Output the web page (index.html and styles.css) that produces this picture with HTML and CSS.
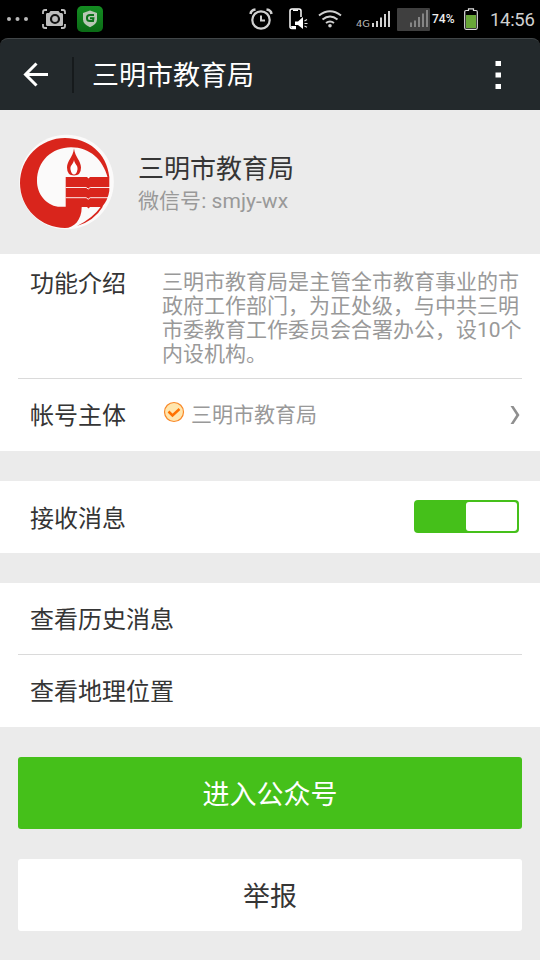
FILE: index.html
```html
<!DOCTYPE html>
<html lang="zh-CN">
<head>
<meta charset="utf-8">
<title>三明市教育局</title>
<link rel="stylesheet" href="styles.css">
</head>
<body>
<div class="status">
  <svg class="s-dots" width="24" height="6" viewBox="0 0 24 6" fill="#b9b9b9"><circle cx="3" cy="3" r="2"/><circle cx="11.500" cy="3" r="2"/><circle cx="20" cy="3" r="2"/></svg>
  <svg class="s-cam" width="24" height="20" viewBox="0 0 24 20"><path d="M1 5V3q0-2 2-2h2M19 1h2q2 0 2 2v2M1 15v2q0 2 2 2h2M19 19h2q2 0 2-2v-2" fill="none" stroke="#bdbdbd" stroke-width="1.800"/><path d="M5 4h2l1.500-2h8L18 4h1.500q1.500 0 1.500 1.500v10q0 1.500-1.500 1.500h-14Q4 17 4 15.500v-10Q4 4 5 4z" fill="#bdbdbd"/><circle cx="13" cy="10" r="4" fill="#bdbdbd" stroke="#111" stroke-width="2.200"/></svg>
  <svg class="s-shield" width="26" height="26" viewBox="0 0 26 26"><defs><linearGradient id="g" x2="0" y2="1"><stop stop-color="#148d22"/><stop offset="1" stop-color="#0b6b16"/></linearGradient></defs><rect width="26" height="26" rx="5" fill="url(#g)"/><path d="M13 4.500 20 7v6.500q0 4.500-7 7.800-7-3.300-7-7.800V7z" fill="#b9c7b5"/><path d="M17 9h-4q-3 0-3 2.500v1Q10 15 13 15h3l.4-2.700H13" fill="none" stroke="#0c731a" stroke-width="2"/></svg>
  <svg class="s-alarm" width="24" height="22" viewBox="0 0 24 22" fill="none" stroke="#d0d0d0"><circle cx="12" cy="12" r="8.700" stroke-width="2.200"/><path d="M12 7.500v5h4" stroke-width="2"/><path d="M1.500 6q.5-4 5-4.500M22.500 6q-.5-4-5-4.500" stroke-width="2.500"/></svg>
  <svg class="s-phone" width="20" height="22" viewBox="0 0 20 22"><path d="M7 20.500H3q-2 0-2-2V3q0-2 2-2h7q2 0 2 2v6" fill="none" stroke="#fff" stroke-width="1.500"/><path d="M4 1.500h5v1.500H4zM2 18h5v3H3zM6 13.500h3l5-4.500v12l-5-4H6z" fill="#fff"/><path d="m15.500 13 2.500-1.500M15.500 15.500h3M15.500 18l2.500 1.300" stroke="#ddd" stroke-width="1.200"/></svg>
  <svg class="s-wifi" width="24" height="18" viewBox="0 0 24 18" fill="none" stroke="#d0d0d0" stroke-width="2"><path d="M1 5.500q11-8.500 22 0M4.500 9.500q7.500-6 15 0M8 13q4-3 8 0"/><circle cx="12" cy="15.700" r="1.800" fill="#d0d0d0" stroke="none"/></svg>
  <svg class="s-sig1" width="35" height="18" viewBox="0 0 35 18"><path d="M16 13h2v4h-2zM20 11h2v6h-2zM24 7.500h2V17h-2zM28 4h2v13h-2zM32 1h2v16h-2z" fill="#d0d0d0"/><text class="net" x="0" y="17.300" textLength="14" lengthAdjust="spacingAndGlyphs">4G</text></svg>
  <svg class="s-sig2" width="33" height="23" viewBox="0 0 33 23"><rect width="33" height="23" rx="1" fill="#3f3f3f"/><path d="M13 14.500h2V19h-2zM17 12.500h2V19h-2zM21 9h2v10h-2zM25 5.500h2V19h-2zM29 2h2v17h-2z" fill="#858585"/></svg>
  <span class="pct">74%</span>
  <svg class="s-bat" width="14" height="22" viewBox="0 0 14 22"><path d="M4.500 2.500v-1.700h5v1.700h2.500q1.300 0 1.300 1.300v16q0 1.500-1.300 1.500H2q-1.300 0-1.300-1.500v-16q0-1.300 1.300-1.300z" fill="none" stroke="#ddd" stroke-width="1.200"/><path d="M2 7h10v13H2z" fill="#69a739"/></svg>
  <span class="time">14:56</span>
</div>
<div class="barwrap">
<header class="bar">
  <svg class="back" width="26" height="26" viewBox="0 0 26 26" fill="none" stroke="#fff" stroke-width="3"><path d="M25 12.500H3M13.500 1.500 2.500 12.500l11 11"/></svg>
  <i class="sep"></i>
  <h1>三明市教育局</h1>
  <svg class="more" width="6" height="28" viewBox="0 0 6 28" fill="#fff"><path d="M.5 0H6v5H.5zM.5 11.500H6v5H.5zM.5 23H6v5H.5z"/></svg>
</header>
</div>
<section class="profile">
  <svg class="logo" width="96" height="96" viewBox="0 0 96 96">
    <circle cx="48.500" cy="48" r="47.300" fill="#fbfafa"/>
    <path d="M47 4A45 45 0 1 0 47 94C56 94 63.700 86 63.700 73H84Q90 66 91.300 57V43C89 19 70 4 47 4zM47.700 43V72.700H40C28 71 19 60 19 47C19 27 34 13.300 53 13.300C72 13.300 85 26 89.500 43z" fill="#d9251c" fill-rule="evenodd"/>
    <path d="M47.700 53.500h20.500l2 1.500 2-1.500H92M47.700 63.700h20.500l2 1.500 2-1.500H90" fill="none" stroke="#fff" stroke-width=".9"/>
    <path d="m69 73 1.500 1.500L72 73z" fill="#d9251c"/>
    <path d="m69 43 1.500 1.500L72 43z" fill="#fff"/>
    <path d="M59 92Q75 84 83 72.500h2Q76 87 59 92z" fill="#d9251c"/>
    <path d="M56 14.500C55 23 49 27 49 33.500Q49 41.500 56 41.500T63 33.500C63 27 57 23 56 14.500z" fill="#d9251c"/>
    <path d="M56 26c-1 5-4 5-3.500 9.500q1 5 3.500 5t3.500-5C60 31 57 31 56 26z" fill="#fff"/>
  </svg>
  <div class="who"><div class="name">三明市教育局</div><div class="wx">微信号: smjy-wx</div></div>
</section>
<section class="group">
  <div class="row intro"><span class="label">功能介绍</span><p>三明市教育局是主管全市教育事业的市<br>政府工作部门，为正处级，与中共三明<br>市委教育工作委员会合署办公，设10个<br>内设机构。</p></div>
  <div class="row line account"><span class="label">帐号主体</span>
    <svg class="check" width="22" height="22" viewBox="0 0 22 22"><circle cx="11" cy="11" r="9.500" fill="#ffe6ae" stroke="#f98828" stroke-width="1.200"/><path d="m5.500 10.500 4 4L16.500 8" fill="none" stroke="#ff7200" stroke-width="2.500"/></svg>
    <span class="owner">三明市教育局</span>
    <svg class="chev" width="10" height="20" viewBox="0 0 10 20"><path d="M.5 1h3L9.500 10l-6 9h-3L6.300 10z" fill="#8f8f8f"/></svg>
  </div>
</section>
<section class="group">
  <div class="row receive"><span class="label">接收消息</span><div class="switch"><i></i></div></div>
</section>
<section class="group">
  <div class="row short"><span class="label">查看历史消息</span></div>
  <div class="row line"><span class="label">查看地理位置</span></div>
</section>
<div class="btn primary">进入公众号</div>
<div class="btn">举报</div>
</body>
</html>
```
FILE: styles.css
```css
* { box-sizing: border-box; }
body {
  margin: 0;
  width: 540px;
  height: 960px;
  overflow: hidden;
  background: #ebebeb;
  color: #353535;
  font-family: Roboto, "Noto Sans CJK SC", sans-serif;
  font-weight: 400;
}
svg { display: block; flex: none; }

.status {
  display: flex;
  align-items: center;
  height: 38px;
  padding-left: 6px;
  background: #000;
  color: #d0d0d0;
}
.s-cam { margin-left: 12px; }
.s-shield { margin-left: 11px; }
.s-alarm { margin-left: 146px; }
.s-phone { margin-left: 16px; }
.s-wifi { margin-left: 9px; }
.s-sig1 { margin-left: 14px; }
.s-sig2 { margin-left: 6px; }
.net { font: 400 9px "DejaVu Sans", sans-serif; fill: #bbb; }
.pct { width: 32px; margin-left: 2px; font-size: 12px; font-weight: 500; color: #eee; }
.s-bat { margin-top: 0; }
.time { margin-left: 12px; padding-top: 2px; font-size: 18.500px; letter-spacing: -.3px; }

.barwrap { background: #000; }
.bar {
  display: flex;
  align-items: center;
  height: 72px;
  padding: 0 39px 0 23px;
  background: #23292c;
  border-top: 1px solid #414648;
  border-radius: 8px 8px 0 0;
}
.sep { width: 2px; height: 36px; margin-left: 23px; background: #161a1c; }
.bar h1 { flex: 1; margin: 2px 0 0 18px; font-size: 27px; font-weight: 400; line-height: 40px; color: #fff; }

.profile { display: flex; height: 144px; padding: 24px 18px; }
.who { margin-left: 24px; padding-top: 16px; }
.name { font-size: 26px; line-height: 38px; }
.wx { margin-top: -1px; font-size: 21px; line-height: 28px; letter-spacing: .05px; color: #999; }

.group { margin-bottom: 30px; padding: 0 18px; background: #fff; }
.row { display: flex; align-items: center; height: 72px; padding-left: 12px; }
.row.short { height: 71px; }
.row.line { height: 73px; border-top: 1px solid #dadada; }
.label { padding-top: 2px; font-size: 24px; line-height: 36px; }
.receive .label { padding-top: 4px; }
.row.intro { height: 124px; align-items: flex-start; padding-top: 10px; }
.intro p { margin: 6px 0 0 36px; font-size: 21px; line-height: 24px; white-space: nowrap; color: #999; }
.check { margin: -6px 0 0 37px; }
.owner { flex: 1; margin: -5px 0 0 6px; font-size: 21px; color: #999; }
.chev { margin-right: 2px; }

.switch {
  display: flex;
  justify-content: flex-end;
  width: 105px;
  height: 33px;
  margin: -1px 3px 0 auto;
  padding: 2px;
  border-radius: 4px;
  background: #45c01a;
}
.switch i { width: 51px; border-radius: 3px; background: #fff; }

.btn {
  height: 72px;
  margin: 0 18px 30px;
  border-radius: 3px;
  background: #fff;
  font-size: 27px;
  line-height: 76px;
  text-align: center;
}
.primary { background: #45c01a; color: #fff; }
```
